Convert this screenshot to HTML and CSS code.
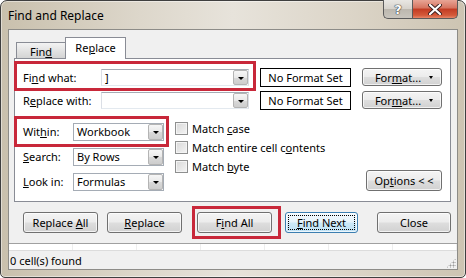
FILE: index.html
```html
<!DOCTYPE html>
<html>
<head>
<meta charset="utf-8">
<link rel="stylesheet" href="styles.css">
</head>
<body>
<div class="window">
  <div class="titlebar">
    <span class="title">Find and Replace</span>
    <div class="caption">
      <div class="cap help">?</div>
      <div class="cap close">
        <svg width="14" height="11" viewBox="0 0 14 11"><path d="M2 1 L12 10 M12 1 L2 10" stroke="#3a2020" stroke-width="4" stroke-linecap="round"/><path d="M2 1 L12 10 M12 1 L2 10" stroke="#fff" stroke-width="2.2" stroke-linecap="round"/></svg>
      </div>
    </div>
  </div>
  <div class="client">
    <div class="tabs">
      <div class="tab"><span>Fin<u>d</u></span></div>
      <div class="tab active"><span>Re<u>p</u>lace</span></div>
    </div>
    <div class="panel">
      <div class="find-rows">
        <div class="row">
          <span class="label lbl-find">Fi<u>n</u>d what:</span>
          <div class="combo wide"><span class="val">]</span><span class="dd"></span></div>
          <div class="fmtset"><span>No Format Set</span></div>
          <div class="btn fmt"><span>For<u>m</u>at...</span><span class="tri"></span></div>
        </div>
        <div class="row">
          <span class="label lbl-find">R<u>e</u>place with:</span>
          <div class="combo wide"><span class="val"></span><span class="dd"></span></div>
          <div class="fmtset"><span>No Format Set</span></div>
          <div class="btn fmt"><span>For<u>m</u>at...</span><span class="tri"></span></div>
        </div>
      </div>
      <div class="options">
        <div class="selects">
          <div class="srow"><span class="label lbl-sel">Wit<u>h</u>in:</span><div class="combo narrow"><span class="val">Workbook</span><span class="dd"></span></div></div>
          <div class="srow"><span class="label lbl-sel"><u>S</u>earch:</span><div class="combo narrow"><span class="val">By Rows</span><span class="dd"></span></div></div>
          <div class="srow"><span class="label lbl-sel"><u>L</u>ook in:</span><div class="combo narrow"><span class="val">Formulas</span><span class="dd"></span></div></div>
        </div>
        <div class="checks">
          <div class="crow"><span class="box"></span><span>Match <u>c</u>ase</span></div>
          <div class="crow"><span class="box"></span><span>Match entire cell c<u>o</u>ntents</span></div>
          <div class="crow"><span class="box"></span><span>Match <u>b</u>yte</span></div>
        </div>
        <div class="optcol"><div class="btn opt"><span>Op<u>t</u>ions &lt; &lt;</span></div></div>
      </div>
    </div>
    <div class="actions">
      <div class="btn act b1"><span>Replace <u>A</u>ll</span></div>
      <div class="btn act b2"><span><u>R</u>eplace</span></div>
      <div class="btn act b3"><span>F<u>i</u>nd All</span></div>
      <div class="btn act b4 default"><span class="focus"><span><u>F</u>ind Next</span></span></div>
      <div class="btn act b5"><span>Close</span></div>
    </div>
    <div class="strip"><span></span><span></span><span></span><span></span><span></span><span></span><span></span></div>
    <div class="status"><span>0 cell(s) found</span><span class="grip"></span></div>
  </div>
  <div class="mark m-find"></div>
  <div class="mark m-within"></div>
  <div class="mark m-findall"></div>
</div>
</body>
</html>
```

FILE: styles.css
```css
* { box-sizing: border-box; }
html, body { margin: 0; padding: 0; }
body {
  width: 466px; height: 278px; overflow: hidden;
  background: #fff;
  font-family: "Noto Sans", "Open Sans", sans-serif;
  font-size: 11px;
  color: #000;
}
u { text-decoration: underline; text-underline-offset: 1px; }
.window {
  position: relative;
  width: 466px; height: 278px;
  border: 1px solid #3f3f3f;
  border-radius: 7px 7px 5px 5px;
  padding: 0 7px 7px 7px;
  background: linear-gradient(to right, #c9c0ad 0%, #ddd7cb 30%, #e7e3db 50%, #dcd5c8 75%, #cdc4b2 100%);
  box-shadow: inset 0 0 0 1px rgba(255,255,255,0.45);
}
.titlebar {
  display: flex;
  align-items: center;
  height: 28px;
}
.title { font-size: 12px; padding-top: 1px; }
.caption {
  margin-left: auto;
  align-self: flex-start;
  margin-top: -1px;
  display: flex;
}
.cap {
  height: 19px;
  display: flex; align-items: center; justify-content: center;
  border: 1px solid #5b5b5b;
  border-top: none;
}
.help {
  width: 29px;
  border-radius: 0 0 0 5px;
  border-right: none;
  background: linear-gradient(#e9e7e3 0%, #d6d2cb 50%, #bcb7ae 51%, #c9c5bd 100%);
  color: #fff;
  font-family: "DejaVu Sans", sans-serif;
  font-weight: bold;
  font-size: 13px;
  text-shadow: 0 0 1px #333, 0 0 1px #333, 0 0 1px #333;
}
.close {
  width: 46px;
  border-radius: 0 0 5px 0;
  background: linear-gradient(#e8a596 0%, #d6735f 45%, #c23b23 50%, #d45a3a 85%, #e8876a 100%);
}
.client {
  height: 241px;
  border: 1px solid #8d8c88;
  background: #f0f0f0;
  display: flex;
  flex-direction: column;
}
.tabs {
  display: flex;
  align-items: flex-end;
  margin: 7px 0 -1px 7px;
  height: 22px;
  position: relative;
  z-index: 2;
}
.tab {
  height: 16px;
  width: 50px;
  border: 1px solid #898c95;
  border-bottom: none;
  background: linear-gradient(#f3f3f3, #e0e0e0 60%, #d4d4d4);
  display: flex; justify-content: center; align-items: center;
  padding-top: 1px;
  margin-bottom: 1px;
}
.tab.active {
  width: 61px;
  height: 22px;
  margin-left: -1px;
  margin-bottom: 0;
  background: #fff;
  padding-bottom: 3px;
}
.panel {
  margin-left: 5px;
  width: 437px;
  height: 144px;
  border: 1px solid #898c95;
  background: #fff;
  padding: 8px 8px 0 8px;
}
.find-rows { display: flex; flex-direction: column; gap: 3px; }
.row { display: flex; align-items: center; height: 20px; }
.label { flex: none; white-space: nowrap; }
.lbl-find { width: 78px; }
.lbl-sel { width: 50px; }
.combo {
  position: relative;
  height: 17px;
  border: 1px solid #abadb3;
  border-color: #a5acb5 #dbdfe6 #e3e9ef #dbdfe6;
  background: #fff;
  display: flex;
  align-items: center;
}
.combo.wide { width: 148px; height: 17px; }
.combo.narrow { width: 91px; height: 18px; border-color: #a5acb5; }
.val { flex: 1; padding-left: 3px; line-height: 1; }
.dd {
  width: 15px; height: 15px;
  margin-right: 0;
  border: 1px solid #b4b4b4;
  border-radius: 2px;
  background: linear-gradient(#f6f6f6, #e9e9e9 50%, #d9d9d9 51%, #cdcdcd);
  position: relative;
}
.combo.narrow .dd { height: 16px; }
.dd::after, .tri {
  content: "";
  position: absolute;
  left: 4px; top: 6px;
  border-left: 3px solid transparent;
  border-right: 3px solid transparent;
  border-top: 3px solid #000;
}
.fmtset {
  margin-left: 11px;
  width: 91px; height: 19px;
  border: 1px solid #000;
  background: #fff;
  display: flex; align-items: center; justify-content: center;
  white-space: nowrap;
}
.btn {
  border: 1px solid #707070;
  border-radius: 3px;
  background: linear-gradient(#f4f4f4 0%, #ececec 48%, #dedede 52%, #d1d1d1 100%);
  box-shadow: inset 0 0 0 1px rgba(255,255,255,0.7);
  display: flex; align-items: center; justify-content: center;
  white-space: nowrap;
}
.fmt {
  position: relative;
  margin-left: 11px;
  width: 80px; height: 18px;
  padding-right: 8px;
}
.fmt .tri { left: auto; right: 8px; top: 7px; border-width: 3px 2.5px 0 2.5px; }
.options {
  display: flex;
  margin-top: 9px;
}
.selects { display: flex; flex-direction: column; }
.srow { display: flex; align-items: center; height: 25px; }
.checks { display: flex; flex-direction: column; margin-left: 11px; }
.crow { display: flex; align-items: center; height: 19px; white-space: nowrap; }
.box {
  width: 13px; height: 13px;
  border: 1px solid #8e8f8f;
  background: linear-gradient(135deg, #d8d8d8, #f4f4f4);
  box-shadow: inset 0 0 0 1px #f4f4f4;
  margin-right: 4px;
  flex: none;
}
.optcol { margin-left: auto; padding-top: 51px; }
.opt { width: 76px; height: 21px; padding-top: 0; }
.actions {
  display: flex;
  margin-top: 10px;
  height: 21px;
}
.act { width: 75px; height: 21px; }
.b1 { margin-left: 14px; }
.b2 { margin-left: 9px; }
.b3 { margin-left: 15px; }
.b4 { margin-left: 13px; width: 73px; }
.b5 { margin-left: 19px; width: 74px; }
.default {
  border-color: #3c7fb1;
  background: linear-gradient(#f2f9fd 0%, #e6f3fb 48%, #cde9f8 52%, #bfe1f5 100%);
  padding: 2px;
}
.focus {
  flex: 1; align-self: stretch;
  border: 1px dotted #000;
  display: flex; align-items: center; justify-content: center;
}
.strip {
  margin-top: 10px;
  height: 8px;
  border-top: 1px solid #a0a0a0;
  border-bottom: 1px solid #dcdcdc;
  background: #fff;
  display: flex;
}
.strip span { flex: 1; border-right: 1px solid #eeeeee; }
.status {
  flex: 1;
  display: flex;
  align-items: center;
  padding-left: 1px;
  position: relative;
}
.grip {
  position: absolute;
  right: 1px; bottom: 1px;
  width: 10px; height: 10px;
  background:
    radial-gradient(circle, #9a9a9a 0.8px, transparent 1.2px) 0 0 / 3px 3px;
  clip-path: polygon(100% 0, 100% 100%, 0 100%);
}
.mark {
  position: absolute;
  border: 3px solid #c8283a;
  pointer-events: none;
}
.m-find { left: 13px; top: 60px; width: 242px; height: 30px; }
.m-within { left: 13px; top: 115px; width: 155px; height: 31px; }
.m-findall { left: 191px; top: 205px; width: 89px; height: 33px; }
```
